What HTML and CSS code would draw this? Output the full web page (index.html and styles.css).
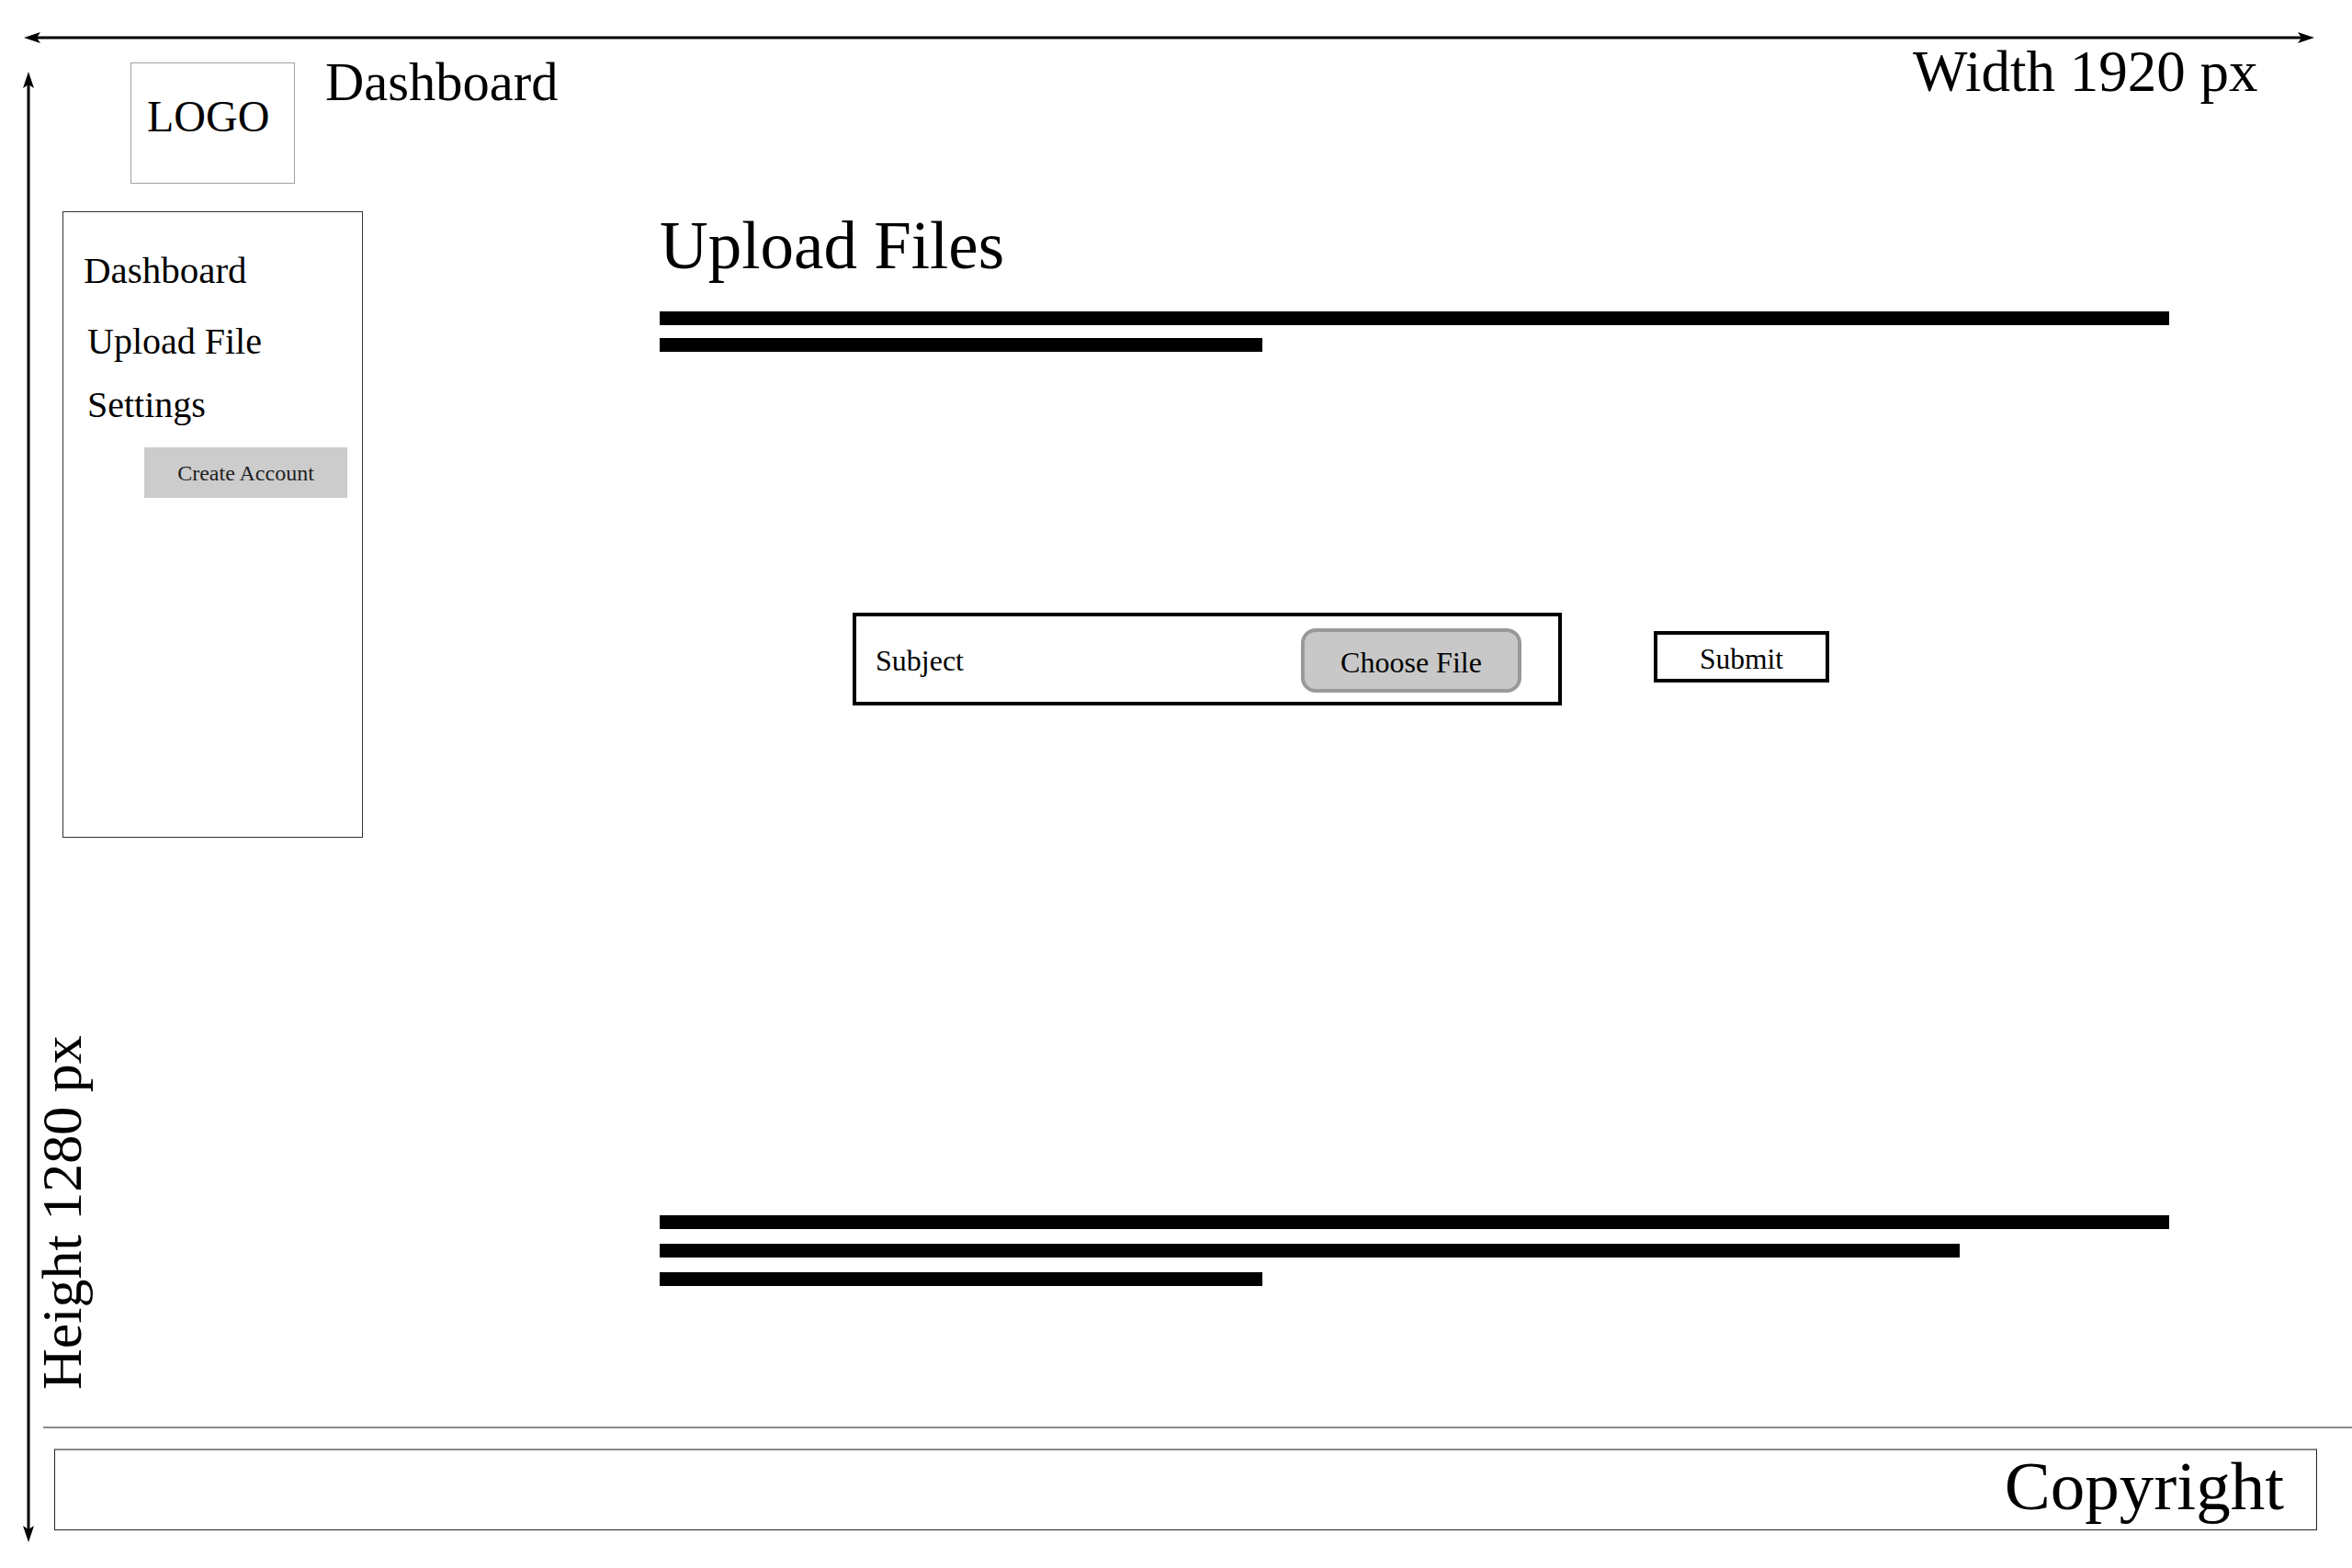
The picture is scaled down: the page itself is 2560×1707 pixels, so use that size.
FILE: index.html
```html
<!DOCTYPE html>
<html lang="en">
<head>
<meta charset="utf-8">
<title>Upload Files – Wireframe</title>
<link rel="stylesheet" href="styles.css">
</head>
<body>
<div class="canvas">
  <svg class="dim-arrow dim-arrow--h" width="2560" height="20" viewBox="0 0 2560 20" aria-hidden="true">
    <line x1="36" y1="10" x2="2509" y2="10" stroke="#000" stroke-width="3"/>
    <path d="M26 10 L44 4 L40 10 L44 16 Z" fill="#000"/>
    <path d="M2519 10 L2501 4 L2505 10 L2501 16 Z" fill="#000"/>
  </svg>
  <svg class="dim-arrow dim-arrow--v" width="20" height="1707" viewBox="0 0 20 1707" aria-hidden="true">
    <line x1="10" y1="88" x2="10" y2="1669" stroke="#000" stroke-width="3"/>
    <path d="M10 78 L4 96 L10 92 L16 96 Z" fill="#000"/>
    <path d="M10 1679 L4 1661 L10 1665 L16 1661 Z" fill="#000"/>
  </svg>
  <span class="dim-label dim-label--w">Width 1920 px</span>
  <span class="dim-label dim-label--h">Height 1280 px</span>

  <div class="page">
    <header class="header">
      <div class="logo">LOGO</div>
      <h1 class="header-title">Dashboard</h1>
    </header>

    <div class="body">
      <nav class="sidebar">
        <ul class="nav">
          <li class="nav-item nav-item--first">Dashboard</li>
          <li class="nav-item nav-item--indent">Upload File</li>
          <li class="nav-item nav-item--indent">Settings</li>
        </ul>
        <button class="btn-create" type="button">Create Account</button>
      </nav>

      <main class="main">
        <h2 class="main-title">Upload Files</h2>
        <div class="bars bars--top">
          <div class="bar bar--long"></div>
          <div class="bar bar--short"></div>
        </div>

        <div class="upload-row">
          <div class="upload-field">
            <span class="upload-subject">Subject</span>
            <span class="btn-choose">Choose File</span>
          </div>
          <button class="btn-submit" type="button">Submit</button>
        </div>

        <div class="bars bars--bottom">
          <div class="bar bar--long"></div>
          <div class="bar bar--mid"></div>
          <div class="bar bar--short"></div>
        </div>
      </main>
    </div>

    <hr class="divider">

    <footer class="footer">
      <span class="footer-text">Copyright</span>
    </footer>
  </div>
</div>
</body>
</html>
```

FILE: styles.css
```css
html, body {
  margin: 0;
  padding: 0;
  background: #fff;
}

body {
  font-family: "Liberation Serif", "Times New Roman", serif;
  color: #000;
}

.canvas {
  position: relative;
  width: 2560px;
  height: 1707px;
  overflow: hidden;
  background: #fff;
}

/* ---------- dimension annotations ---------- */
.dim-arrow {
  position: absolute;
  display: block;
}

.dim-arrow--h {
  left: 0;
  top: 31px;
}

.dim-arrow--v {
  left: 21px;
  top: 0;
}

.dim-label {
  position: absolute;
  font-size: 63px;
  line-height: 1;
  white-space: nowrap;
}

.dim-label--w {
  left: 2082px;
  top: 47px;
}

.dim-label--h {
  left: 0;
  top: 0;
  font-size: 62px;
  transform-origin: 0 0;
  transform: translate(36px, 1513px) rotate(-90deg);
}

/* ---------- page ---------- */
.page {
  display: flex;
  flex-direction: column;
  padding-left: 47px;
}

.header {
  display: flex;
  align-items: flex-start;
  gap: 33px;
  padding: 61px 0 0 95px;
}

.logo {
  box-sizing: border-box;
  width: 179px;
  height: 132px;
  margin-top: 7px;
  padding: 34px 0 0 17px;
  border: 1px solid #a0a0a0;
  font-size: 48px;
  line-height: 1;
}

.header-title {
  margin: 0;
  font-size: 58.5px;
  font-weight: normal;
  line-height: 1;
}

.body {
  display: flex;
  align-items: flex-start;
  gap: 323px;
  margin-top: 30px;
  margin-left: 21px;
}

/* ---------- sidebar ---------- */
.sidebar {
  box-sizing: border-box;
  width: 327px;
  height: 682px;
  flex: none;
  display: flex;
  flex-direction: column;
  padding: 43px 16px 0 22px;
  border: 1px solid #333;
}

.nav {
  list-style: none;
  margin: 0;
  padding: 0;
  display: flex;
  flex-direction: column;
  gap: 29px;
}

.nav-item {
  font-size: 40px;
  line-height: 1;
}

.nav-item--first {
  margin-bottom: 8px;
  font-size: 41px;
}

.nav-item--indent {
  padding-left: 4px;
}

.btn-create {
  align-self: flex-end;
  width: 221px;
  height: 55px;
  margin-top: 26px;
  padding: 0;
  border: none;
  background: #cccccc;
  color: #222;
  font-family: inherit;
  font-size: 24px;
  line-height: 1;
}

/* ---------- main ---------- */
.main {
  flex: 1;
  display: flex;
  flex-direction: column;
}

.main-title {
  margin: 1px 0 0;
  font-size: 73px;
  font-weight: normal;
  line-height: 1;
}

.bars {
  display: flex;
  flex-direction: column;
}

.bars--top {
  margin-top: 35px;
  gap: 14px;
}

.bars--bottom {
  margin-top: 555px;
  gap: 16px;
}

.bar {
  height: 15px;
  background: #000;
}

.bar--long {
  width: 1643px;
}

.bar--mid {
  width: 1415px;
}

.bar--short {
  width: 656px;
}

.upload-row {
  display: flex;
  align-items: flex-start;
  gap: 100px;
  margin-top: 284px;
  padding-left: 210px;
}

.upload-field {
  box-sizing: border-box;
  width: 772px;
  height: 101px;
  display: flex;
  align-items: center;
  justify-content: space-between;
  padding: 0 40px 0 21px;
  border: 4px solid #000;
}

.upload-subject {
  font-size: 32px;
  line-height: 1;
  margin-top: 2px;
}

.btn-choose {
  box-sizing: border-box;
  width: 240px;
  height: 70px;
  display: flex;
  align-items: center;
  justify-content: center;
  padding-top: 3px;
  margin-top: 3px;
  border: 4px solid #999;
  border-radius: 16px;
  background: #c8c8c8;
  font-size: 32px;
  line-height: 1;
}

.btn-submit {
  box-sizing: border-box;
  width: 191px;
  height: 56px;
  margin-top: 20px;
  padding: 5px 0 0;
  border: 4px solid #000;
  background: #fff;
  color: #000;
  font-family: inherit;
  font-size: 31.5px;
  line-height: 1;
}

/* ---------- footer ---------- */
.divider {
  height: 2px;
  margin: 153px 0 0;
  border: none;
  background: #8a8a8a;
}

.footer {
  box-sizing: border-box;
  height: 89px;
  margin: 22px 38px 0 12px;
  padding: 1px 35px 0 0;
  border: 1px solid #222;
  border-top: 2px solid #8a8a8a;
  text-align: right;
}

.footer-text {
  display: inline-block;
  font-size: 75px;
  line-height: 1;
}
```
